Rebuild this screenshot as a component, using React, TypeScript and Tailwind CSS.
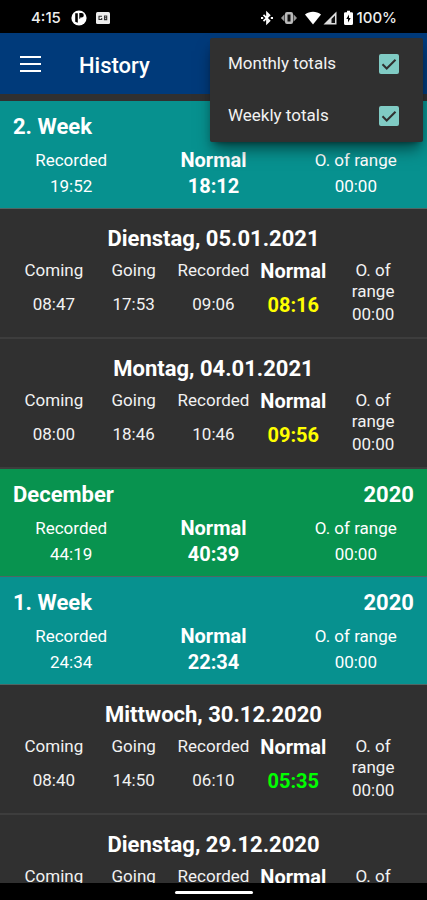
import { useState } from "react";
import clsx from "clsx";

type Summary = {
  kind: "week" | "month";
  title: string;
  year?: string;
  recorded: string;
  normal: string;
};

type Day = {
  kind: "day";
  title: string;
  coming: string;
  going: string;
  recorded: string;
  normal: string;
  tone: "yellow" | "green";
};

const entries: (Summary | Day)[] = [
  { kind: "week", title: "2. Week", recorded: "19:52", normal: "18:12" },
  { kind: "day", title: "Dienstag, 05.01.2021", coming: "08:47", going: "17:53", recorded: "09:06", normal: "08:16", tone: "yellow" },
  { kind: "day", title: "Montag, 04.01.2021", coming: "08:00", going: "18:46", recorded: "10:46", normal: "09:56", tone: "yellow" },
  { kind: "month", title: "December", year: "2020", recorded: "44:19", normal: "40:39" },
  { kind: "week", title: "1. Week", year: "2020", recorded: "24:34", normal: "22:34" },
  { kind: "day", title: "Mittwoch, 30.12.2020", coming: "08:40", going: "14:50", recorded: "06:10", normal: "05:35", tone: "green" },
  { kind: "day", title: "Dienstag, 29.12.2020", coming: "08:00", going: "16:30", recorded: "08:30", normal: "07:45", tone: "yellow" },
];

function StatusBar() {
  return (
    <div className="flex h-[33px] shrink-0 items-center justify-between bg-black pt-[3px] pr-[30px] pl-[31px] font-['Inter',sans-serif] text-[15px] font-medium text-[#eee]">
      <div className="flex items-center">
        <span>4:15</span>
        <svg className="ml-[10px] size-4" viewBox="0 0 16 16">
          <circle cx="8" cy="8" r="7.6" fill="#fff" />
          <path d="M4.2 3.2h2.600v9.600l-2.600-1zM8.300 3h2.200a2 2 0 0 1 0 4.600H9.200v1.200H8.300z" fill="#000" />
        </svg>
        <svg className="ml-2 h-3 w-4" viewBox="0 0 16 12">
          <rect x="1" y="0" width="14" height="12" rx="1.5" fill="#eee" />
          <path d="M7 4.2H4v3.3h2.7V6M9.5 4h2.2v3.6H9.5zM9.5 5.8h2" fill="none" stroke="#333" strokeWidth="1.1" />
        </svg>
      </div>
      <div className="flex items-center">
        <svg className="h-4 w-3" viewBox="0 0 12 16" fill="none" stroke="#fff" strokeWidth="1.7">
          <path d="M2.500 4.800 8.500 10.800 6 13.200V2.800l2.500 2.400-6 6" />
          <path d="M0 8h2.200M9.800 8H12" strokeWidth="2" />
        </svg>
        <svg className="ml-2 h-4 w-4" viewBox="0 0 16 16">
          <path d="M0 8 3.500 4.200v7.600zM16 8l-3.500-3.800v7.600z" fill="#999" />
          <rect x="4" y="2" width="8" height="12" rx="2" fill="#bbb" />
          <rect x="6.500" y="4.500" width="3" height="7" fill="#111" />
        </svg>
        <svg className="ml-2 h-4 w-4" viewBox="0 0 16 16">
          <path d="M0 4.600C4.500.9 11.500.9 16 4.600L8 14.500z" fill="#fff" />
        </svg>
        <svg className="ml-0.5 h-4 w-[14px]" viewBox="0 0 14 16">
          <path d="M.5 14.500 13.500 1.500v13z" fill="#ddd" />
          <path d="M8.500 9 12 5.500v7.500H8.500z" fill="#111" />
        </svg>
        <svg className="ml-[7px] h-4 w-[9px]" viewBox="0 0 9 16">
          <path d="M3 .8h3v1.400h1.500q1.500 0 1.500 1.300v10q0 1.500-1.500 1.500h-6Q0 15 0 13.500v-10q0-1.300 1.500-1.300H3z" fill="#fff" />
          <path d="M5 4.500 2.300 9H4v3.500L6.700 8H5z" fill="#000" />
        </svg>
        <span className="ml-1">100%</span>
      </div>
    </div>
  );
}

function TotalsOption({ label, checked, onChange }: { label: string; checked: boolean; onChange: () => void }) {
  return (
    <label className="flex h-[52px] items-center justify-between pr-6 pl-[18px] text-[17px] text-[#f2f2f2]">
      {label}
      <span className="grid size-5">
        <input
          type="checkbox"
          checked={checked}
          onChange={onChange}
          className="col-start-1 row-start-1 size-5 appearance-none rounded-xs border-2 border-[#80cbc4] checked:bg-[#80cbc4]"
        />
        {checked && (
          <svg className="pointer-events-none col-start-1 row-start-1 size-5" viewBox="0 0 20 20">
            <path d="m3.500 10.300 4.200 4.200 8.800-8.800" fill="none" stroke="#303030" strokeWidth="2" />
          </svg>
        )}
      </span>
    </label>
  );
}

function SummaryCard({ entry }: { entry: Summary }) {
  return (
    <section className={clsx("h-[108px] shrink-0 border-b border-[#4f6664] pt-[13px]", entry.kind === "week" ? "bg-[#07918f]" : "bg-[#08934f]")}>
      <div className="flex justify-between px-[13px] text-[22px] leading-[26px] font-bold">
        <h2>{entry.title}</h2>
        <span>{entry.year}</span>
      </div>
      <dl className="grid grid-cols-3 pt-[7px] text-center text-[17px] leading-[26px]">
        <div>
          <dt>Recorded</dt>
          <dd>{entry.recorded}</dd>
        </div>
        <div className="text-[20px] font-bold">
          <dt>Normal</dt>
          <dd>{entry.normal}</dd>
        </div>
        <div>
          <dt>O. of range</dt>
          <dd>00:00</dd>
        </div>
      </dl>
    </section>
  );
}

function DayCard({ entry }: { entry: Day }) {
  return (
    <section className="h-[130px] shrink-0 border-b-2 border-[#3d3d3d] pt-[17px] text-[#f2f2f2]">
      <h2 className="text-center text-[22px] leading-[26px] font-bold text-white">{entry.title}</h2>
      <dl className="grid grid-cols-5 px-[14px] pt-2 text-center text-[17px] leading-[21px]">
        <div className="flex flex-col gap-[13px]">
          <dt>Coming</dt>
          <dd>{entry.coming}</dd>
        </div>
        <div className="flex flex-col gap-[13px]">
          <dt>Going</dt>
          <dd>{entry.going}</dd>
        </div>
        <div className="flex flex-col gap-[13px]">
          <dt>Recorded</dt>
          <dd>{entry.recorded}</dd>
        </div>
        <div className="flex flex-col gap-[13px] pt-px text-[20px] font-bold">
          <dt className="text-white">Normal</dt>
          <dd className={entry.tone === "yellow" ? "text-[#ffff00]" : "text-[#00ff00]"}>{entry.normal}</dd>
        </div>
        <div className="flex flex-col gap-0.5">
          <dt className="px-3">O. of range</dt>
          <dd>00:00</dd>
        </div>
      </dl>
    </section>
  );
}

export default function App() {
  const [monthly, setMonthly] = useState(true);
  const [weekly, setWeekly] = useState(true);

  const visible = entries.filter((e) => (e.kind === "month" ? monthly : e.kind === "week" ? weekly : true));

  return (
    <div className="flex h-screen flex-col overflow-hidden bg-[#303030] font-['Roboto',sans-serif] text-white">
      <StatusBar />

      <header className="relative flex h-[61px] shrink-0 items-center bg-[#003a7a] pl-5">
        <button type="button" aria-label="Menu" className="flex w-[21px] flex-col gap-[5px] py-2">
          <span className="h-0.5 bg-white" />
          <span className="h-0.5 bg-white" />
          <span className="h-0.5 bg-white" />
        </button>
        <h1 className="ml-[38px] pt-1 text-[22px] font-medium">History</h1>

        {/* Overflow menu */}
        <div className="absolute top-[5px] right-1 z-10 w-[213px] rounded-xs bg-[#303030] shadow-lg shadow-black/50">
          <TotalsOption label="Monthly totals" checked={monthly} onChange={() => setMonthly(!monthly)} />
          <TotalsOption label="Weekly totals" checked={weekly} onChange={() => setWeekly(!weekly)} />
        </div>
      </header>

      <main className="flex min-h-0 flex-1 flex-col overflow-y-auto pt-[7px] [scrollbar-width:none]">
        {visible.map((entry) =>
          entry.kind === "day" ? <DayCard key={entry.title} entry={entry} /> : <SummaryCard key={entry.title} entry={entry} />
        )}
      </main>

      {/* Gesture bar */}
      <div className="flex h-[17px] shrink-0 justify-center bg-black pt-2">
        <div className="h-[3px] w-[78px] rounded-full bg-white" />
      </div>
    </div>
  );
}
